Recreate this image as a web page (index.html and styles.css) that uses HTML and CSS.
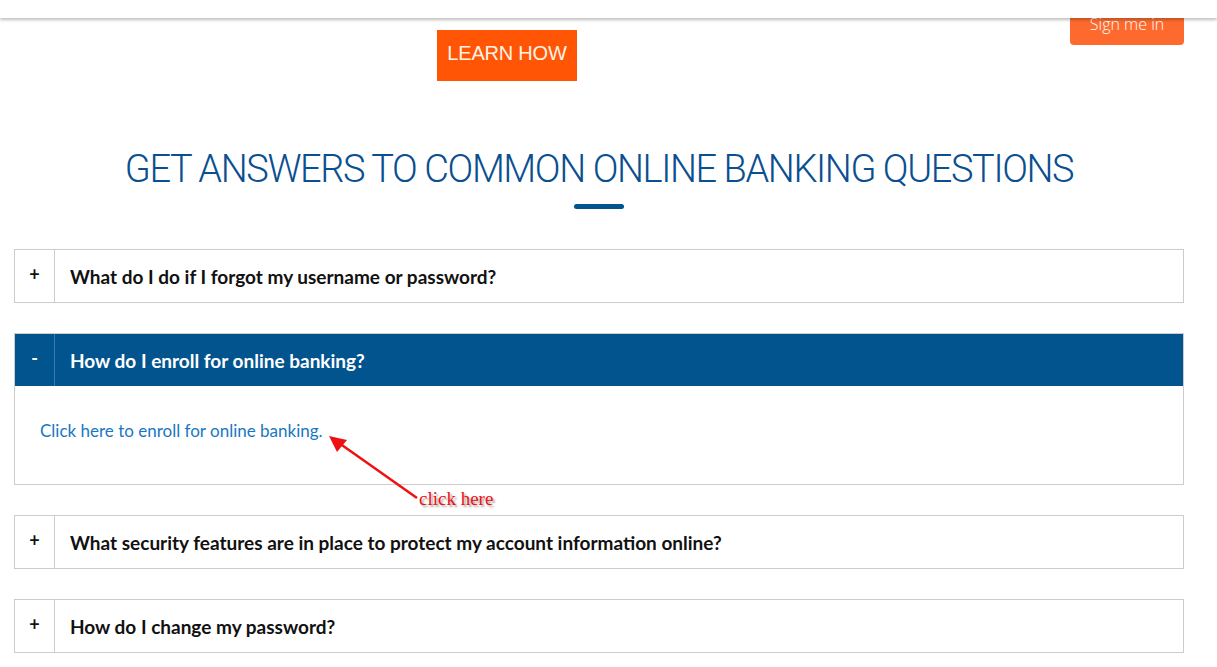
FILE: index.html
```html
<!DOCTYPE html>
<html>
<head>
  <meta name="viewport" content="width=device-width, initial-scale=1.0">
  <title>Online Banking FAQ</title>
  <link rel="stylesheet" href="styles.css">
</head>
<body>
  <div class="topbar"></div>

  <div class="page">
    <div class="promo">
      <a class="learn-how" href="#">LEARN HOW</a>
      <a class="sign-in" href="#">Sign me in</a>
    </div>

    <h1 class="faq-title">GET ANSWERS TO COMMON ONLINE BANKING QUESTIONS</h1>
    <div class="title-bar"></div>

    <div class="faq">
      <div class="faq-item">
        <div class="faq-head">
          <span class="toggle">+</span>
          <span class="question">What do I do if I forgot my username or password?</span>
        </div>
      </div>

      <div class="faq-item open">
        <div class="faq-head">
          <span class="toggle">-</span>
          <span class="question">How do I enroll for online banking?</span>
        </div>
        <div class="faq-body">
          <a href="#">Click here to enroll for online banking.</a>
          <svg class="note-arrow" width="100" height="70" viewBox="0 0 100 70">
            <line x1="92" y1="66" x2="14" y2="11" stroke="#ee1111" stroke-width="2.5"/>
            <polygon points="4,4 22,8 12,20" fill="#ee1111"/>
          </svg>
          <span class="note">click here</span>
        </div>
      </div>

      <div class="faq-item">
        <div class="faq-head">
          <span class="toggle">+</span>
          <span class="question">What security features are in place to protect my account information online?</span>
        </div>
      </div>

      <div class="faq-item">
        <div class="faq-head">
          <span class="toggle">+</span>
          <span class="question">How do I change my password?</span>
        </div>
      </div>
    </div>
  </div>
</body>
</html>
```

FILE: styles.css
```css
body {
  margin: 0;
  padding: 0;
  background-color: #ffffff;
  font-family: "Lato", "Open Sans", sans-serif;
  color: #111111;
}

.topbar {
  position: fixed;
  top: 0;
  left: 0;
  right: 0;
  height: 18px;
  background-color: #ffffff;
  box-shadow: 0 2px 3px rgba(0, 0, 0, 0.25);
  z-index: 10;
}

.page {
  width: 1170px;
  margin-left: 14px;
}

.promo {
  display: flex;
  align-items: flex-start;
  padding-top: 5px;
}

.learn-how {
  margin: 25px 0 0 423px;
  width: 140px;
  height: 51px;
  line-height: 47px;
  text-align: center;
  background-color: #ff5505;
  color: #fff3e6;
  font-family: "Liberation Sans", Arial, sans-serif;
  font-size: 20px;
  letter-spacing: -0.2px;
  text-decoration: none;
}

.sign-in {
  margin-left: auto;
  width: 114px;
  height: 40px;
  line-height: 38px;
  text-align: center;
  background-color: #fe6a2e;
  color: #ffffff;
  border-radius: 0 0 4px 4px;
  font-family: "Open Sans", sans-serif;
  font-size: 16px;
  font-weight: 300;
  text-decoration: none;
}

.faq-title {
  margin: 66px 0 0;
  text-align: center;
  font-family: "Roboto", sans-serif;
  font-weight: 300;
  font-size: 38px;
  color: #0a4f8f;
  letter-spacing: -1.4px;
}

.title-bar {
  width: 50px;
  height: 5px;
  margin: 13px auto 0;
  border-radius: 3px;
  background-color: #02548f;
}

.faq {
  margin-top: 40px;
  display: flex;
  flex-direction: column;
  gap: 30px;
}

.faq-item {
  border: 1px solid #cccccc;
}

.faq-head {
  display: flex;
  align-items: center;
  height: 52px;
}

.toggle {
  width: 40px;
  height: 100%;
  border-right: 1px solid #cccccc;
  display: flex;
  align-items: center;
  justify-content: center;
  font-size: 18px;
  font-weight: 700;
  padding-bottom: 4px;
  box-sizing: border-box;
}

.question {
  padding-left: 15px;
  font-size: 19px;
  font-weight: 700;
}

.open .faq-head {
  background-color: #02548e;
  color: #ffffff;
}

.open .toggle {
  border-right-color: #3a78ad;
}

.faq-body {
  position: relative;
  height: 98px;
  padding: 34px 0 0 25px;
  box-sizing: border-box;
}

.faq-body a {
  color: #1877c3;
  text-decoration: none;
  font-size: 17px;
}

.note-arrow {
  position: absolute;
  left: 310px;
  top: 46px;
}

.note {
  position: absolute;
  left: 404px;
  top: 102px;
  font-family: "Liberation Serif", serif;
  font-size: 19px;
  color: #ee1111;
  text-shadow: 2px 2px 2px rgba(0, 0, 0, 0.35);
  z-index: 2;
}
```
